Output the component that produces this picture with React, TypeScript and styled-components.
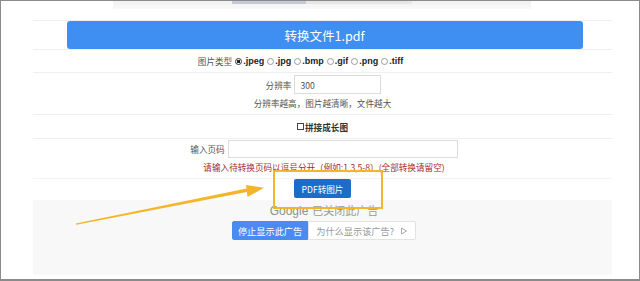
import React from 'react';
import styled, { createGlobalStyle } from 'styled-components';

const GlobalStyle = createGlobalStyle`
  html, body {
    margin: 0;
    padding: 0;
    background: #ffffff;
  }
  body {
    font-family: "Noto Sans CJK SC", "Noto Sans", "Liberation Sans", sans-serif;
  }
`;

// ---------- frame ----------

const Frame = styled.div`
  position: relative;
  width: 640px;
  height: 281px;
  box-sizing: border-box;
  border: 1px solid #8a8a8a;
  border-bottom-width: 2px;
  background: #ffffff;
  overflow: hidden;
`;

const TopStrip = styled.div`
  height: 8px;
  margin: 0 108px 0 112px;
  background: linear-gradient(#f1f1f1, #f9f9f9);
  display: flex;
`;

const TopTab = styled.div<{ $w: number; $bg: string; $ml?: number }>`
  width: ${p => p.$w}px;
  margin-left: ${p => p.$ml || 0}px;
  height: 3px;
  background: ${p => p.$bg};
`;

const Form = styled.div`
  width: 579px;
  margin: 11px 0 0 32px;
  display: flex;
  flex-direction: column;
`;

const Row = styled.div<{ $h: number }>`
  height: ${p => p.$h}px;
  box-sizing: border-box;
  border-top: 1px solid #efefef;
  display: flex;
  flex-direction: column;
  align-items: center;
  justify-content: center;
  gap: 3px;
`;

const Inline = styled.div`
  display: flex;
  align-items: center;
  gap: 3px;
`;

// ---------- parts ----------

const TitleBar = styled.div`
  width: 516px;
  height: 28px;
  border-radius: 3px;
  background: #3e8ff1;
  color: #ffffff;
  font-size: 12.5px;
  display: flex;
  align-items: center;
  justify-content: center;
  margin-left: 4px;
`;

const Label = styled.span`
  font-size: 8.6px;
  color: #555;
  white-space: nowrap;
`;

const Option = styled.span`
  display: inline-flex;
  align-items: center;
  gap: 1px;
  font-size: 9px;
  font-weight: 700;
  color: #222;
  font-family: "Liberation Sans", "Noto Sans CJK SC", sans-serif;
`;

const Radio = styled.span<{ $on?: boolean }>`
  width: 7px;
  height: 7px;
  border-radius: 50%;
  box-sizing: border-box;
  border: 1px solid ${p => (p.$on ? '#333' : '#9a9a9a')};
  background: ${p => (p.$on ? 'radial-gradient(circle, #222 45%, #fff 55%)' : '#fff')};
`;

const TextInput = styled.div<{ $w: number; $h: number }>`
  width: ${p => p.$w}px;
  height: ${p => p.$h}px;
  box-sizing: border-box;
  border: 1px solid #dcdcdc;
  background: #fff;
  font-size: 8.6px;
  color: #555;
  padding-left: 5px;
  display: flex;
  align-items: center;
`;

const Hint = styled.div<{ $red?: boolean }>`
  font-size: 8.6px;
  color: ${p => (p.$red ? '#a32a28' : '#555')};
  white-space: nowrap;
`;

const Check = styled.span`
  display: inline-flex;
  align-items: center;
  font-size: 8.6px;
  font-weight: 700;
  color: #333;
  &::before {
    content: '';
    width: 7px;
    height: 7px;
    box-sizing: border-box;
    border: 1px solid #444;
    margin-right: 1px;
  }
`;

const SubmitButton = styled.div`
  width: 57px;
  height: 19px;
  border-radius: 2px;
  background: #1a6dc8;
  color: #fff;
  font-size: 8.6px;
  display: flex;
  align-items: center;
  justify-content: center;
`;

const AdArea = styled.div`
  height: 75px;
  margin-top: 2px;
  background: #f8f8f8;
  display: flex;
  flex-direction: column;
  align-items: center;
  padding-top: 2px;
  box-sizing: border-box;
`;

const AdTitle = styled.div`
  font-size: 11px;
  color: #9a9a9a;
  line-height: 16px;
  margin-left: 3px;
  span {
    font-family: "Liberation Sans", sans-serif;
    font-size: 12px;
    color: #8f8f8f;
    margin-right: 4px;
  }
`;

const AdButtons = styled.div`
  display: flex;
  margin-top: 2px;
  margin-left: 3px;
`;

const AdButton = styled.div<{ $primary?: boolean }>`
  height: 19px;
  box-sizing: border-box;
  padding: 0 ${p => (p.$primary ? 5 : 7)}px;
  display: flex;
  align-items: center;
  gap: 6px;
  font-size: 9.2px;
  background: ${p => (p.$primary ? '#4a8bf2' : '#ffffff')};
  color: ${p => (p.$primary ? '#ffffff' : '#999')};
  border: 1px solid ${p => (p.$primary ? '#4a8bf2' : '#e2e2e2')};
  border-radius: ${p => (p.$primary ? '2px 0 0 2px' : '0 2px 2px 0')};
`;

// ---------- annotation overlay ----------

const Highlight = styled.div`
  position: absolute;
  left: 272px;
  top: 169px;
  width: 110px;
  height: 39px;
  box-sizing: border-box;
  border: 2px solid #f1b62c;
  pointer-events: none;
`;

const Overlay = styled.svg`
  position: absolute;
  left: 0;
  top: 0;
  pointer-events: none;
`;

const types = ['.jpeg', '.jpg', '.bmp', '.gif', '.png', '.tiff'];

export default function App() {
  return (
    <>
      <GlobalStyle />
      <Frame>
        <TopStrip>
          <TopTab $w={74} $bg="#c3c9d6" $ml={119} />
          <TopTab $w={106} $bg="#e6e6e6" />
        </TopStrip>
        <Form>
          <Row $h={29} style={{ justifyContent: 'flex-end' }}>
            <TitleBar>转换文件1.pdf</TitleBar>
          </Row>
          <Row $h={23}>
            <Inline style={{ marginRight: 44 }}>
              <Label>图片类型</Label>
              {types.map((t, i) => (
                <Option key={t}>
                  <Radio $on={i === 0} />
                  {t}
                </Option>
              ))}
            </Inline>
          </Row>
          <Row $h={42} style={{ justifyContent: 'flex-start', paddingTop: 2 }}>
            <Inline style={{ marginLeft: 2 }}>
              <Label>分辨率</Label>
              <TextInput $w={87} $h={19}>300</TextInput>
            </Inline>
            <Hint>分辨率越高，图片越清晰，文件越大</Hint>
          </Row>
          <Row $h={24}>
            <Check>拼接成长图</Check>
          </Row>
          <Row $h={40} style={{ justifyContent: 'flex-start', paddingTop: 1 }}>
            <Inline style={{ marginLeft: 3 }}>
              <Label>输入页码</Label>
              <TextInput $w={230} $h={18} />
            </Inline>
            <Hint $red style={{ marginLeft: 3 }}>请输入待转换页码以逗号分开（例如:1,3,5-8）(全部转换请留空)</Hint>
          </Row>
          <Row $h={20} style={{ justifyContent: 'flex-end', borderTopColor: '#f3f3f3' }}>
            <SubmitButton>PDF转图片</SubmitButton>
          </Row>
          <AdArea>
            <AdTitle>
              <span>Google</span>已关闭此广告
            </AdTitle>
            <AdButtons>
              <AdButton $primary>停止显示此广告</AdButton>
              <AdButton>
                为什么显示该广告?
                <svg width="8" height="8" viewBox="0 0 8 8">
                  <path d="M1.5 1 L6.5 4 L1.5 7 Z" fill="none" stroke="#aaa" strokeWidth="1" />
                </svg>
              </AdButton>
            </AdButtons>
          </AdArea>
        </Form>
        <Highlight />
        <Overlay width="640" height="281" viewBox="0 0 640 281">
          <polygon
            points="75.2,223.8 74.8,222.4 245.6,187.4 244.9,183.9 263,186.8 246.5,196.0 245.9,191.0"
            fill="#f3b52a"
          />
        </Overlay>
      </Frame>
    </>
  );
}
